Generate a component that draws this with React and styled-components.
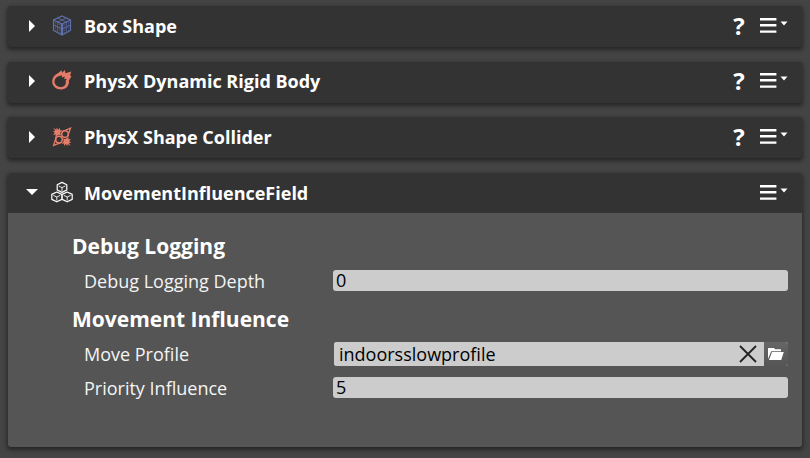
import React, { useState } from "react";
import styled, { createGlobalStyle } from "styled-components";

const Global = createGlobalStyle`
  *, *::before, *::after { box-sizing: border-box; }
  body {
    margin: 0;
    background: #444444;
    color: #ffffff;
    font-family: "Open Sans", "Noto Sans", sans-serif;
    font-size: 18px;
    line-height: 24px;
  }
`;

const Inspector = styled.main`
  display: flex;
  flex-direction: column;
  justify-content: space-between;
  min-height: 100vh;
  padding: 6px 8px 11px;
`;

const Card = styled.section`
  border-radius: 3px;
  background: ${(p) => (p.$open ? "#555555" : "#333333")};
  box-shadow: 0 2px 4px 1px rgba(0, 0, 0, 0.45);
`;

const CardHeader = styled.header`
  display: flex;
  align-items: center;
  height: ${(p) => (p.$open ? 40 : 41)}px;
  padding: ${(p) => (p.$open ? "0 14px 0 16px" : "0 14px 2px 16px")};
  border-radius: ${(p) => (p.$open ? "3px 3px 0 0" : "3px")};
  background: #333333;
`;

const IconButton = styled.button`
  display: flex;
  align-items: center;
  justify-content: center;
  flex: none;
  width: ${(p) => p.$width}px;
  height: 24px;
  padding: 0;
  border: 0;
  background: none;
  color: inherit;
`;

const HelpButton = styled(IconButton)`
  font-family: inherit;
  font-size: 24px;
  line-height: 24px;
  font-weight: 700;
`;

const IconSlot = styled.span`
  display: flex;
  padding-left: 8px;
`;

const TypeIcon = styled.svg`
  flex: none;
  width: 24px;
  height: 24px;
  margin: 0 10px 0 2px;
  fill: none;
  stroke: ${(p) => p.$color};
  color: ${(p) => p.$color};
`;

const Title = styled.h2`
  flex: 1;
  margin: 0;
  font-size: 18px;
  line-height: 24px;
  font-weight: 700;
`;

const Tools = styled.div`
  display: flex;
  gap: 13px;
`;

const Body = styled.div`
  padding: 20px 14px 47px 64px;
`;

const Section = styled.section`
  & + & { margin-top: 13px; }
`;

const Heading = styled.h3`
  margin: 0 0 10px;
  font-size: 21px;
  line-height: 26px;
  font-weight: 700;
`;

const Fields = styled.div`
  display: grid;
  gap: 10px;
`;

const Field = styled.div`
  display: grid;
  grid-template-columns: 249px 1fr;
  align-items: center;
  padding-left: 12px;
`;

const Label = styled.label`
  line-height: 24px;
  color: #f4f4f4;
`;

const ValueInput = styled.input`
  width: 100%;
  min-width: 0;
  height: 21px;
  padding: 0 3px;
  border: 0;
  border-radius: 3px;
  outline: 0;
  background: #cccccc;
  color: #000000;
  font: inherit;
  line-height: 21px;
`;

const AssetPicker = styled.div`
  display: flex;
  height: 24px;
  margin-left: 1px;
  border-radius: 3px;
  overflow: hidden;
  background: #cccccc;
`;

const AssetInput = styled(ValueInput)`
  flex: 1;
  height: 24px;
  padding: 0 5px;
  border-radius: 0;
`;

const BrowseButton = styled(IconButton)`
  background: linear-gradient(#666666, #555555);
`;

const Caret = ({ open }) => (
  <svg width="16" height="16" viewBox="0 0 16 16" fill="#fff" aria-hidden="true">
    <path d={open ? "M2 4H14L8 10Z" : "M5 2V14L11 8Z"} />
  </svg>
);

const BoxIcon = () => (
  <TypeIcon $color="#5f6fae" viewBox="0 0 24 24" strokeWidth="1" aria-hidden="true">
    <path strokeWidth="1.2" d="M12 2L20.5 6V16.5L12 21L3.5 16.5V6ZM3.5 6L12 10L20.5 6" />
    <path strokeWidth="2.2" d="M12 10V21" />
    <path strokeWidth="0.8" d="M7.7 4L12 6L16.3 4M7.7 8L12 6L16.3 8M7.7 8V18.6M16.3 8V18.6M3.5 11L12 15.2L20.5 11" />
    <path strokeWidth="1.4" strokeDasharray="1.6 1" d="M5.5 8V17M18.5 8V17M9.8 10V19.5M14.2 10V19.5" strokeOpacity="0.55" />
  </TypeIcon>
);

const FireballIcon = () => (
  <TypeIcon $color="#e57b69" viewBox="0 0 24 24" aria-hidden="true">
    <path
      fill="currentColor"
      stroke="none"
      fillRule="evenodd"
      d="M21.3 2.6L20.1 6.5L21.5 7.2L18.9 11.4C19.7 16.5 16 20.4 11 20.4C6.2 20.4 2.2 17 2.2 12.4C2.2 8.9 4.5 6 8.3 4.1L11.6 1.2L12.1 3.7L14.8 1.1L15.5 4.2ZM9.3 6.9C6.3 7.7 4.5 9.8 4.5 12.6C4.5 15.7 7.3 18.1 10.8 18.1C14.3 18.1 16.6 15 15.6 12.2L16.9 9.8L14.3 10.2L14.7 7.6L11.8 8.4L12 6.2Z"
    />
  </TypeIcon>
);

const ColliderIcon = () => (
  <TypeIcon $color="#e57b69" viewBox="0 0 24 24" strokeWidth="1.5" aria-hidden="true">
    <circle cx="15" cy="9" r="3.3" />
    <circle cx="9" cy="14.5" r="3.3" />
    <path strokeWidth="1.3" d="M12.3 6.5L20.5 3.2L17.8 11M6.2 12L3.6 20.3L11.5 17.3" />
    <path
      fill="currentColor"
      stroke="none"
      d="M3.3 3L6.4 4.8L6.6 2.6L8.2 4.7L10 2.8L9.9 5.3L12.3 5L10.3 7.5L10.8 10.2L8.2 9.8L5.5 12L5.6 9.5L3 9.8L4.8 7.8L2.8 6.2L5.2 5.9ZM20.8 20.8L17.6 19L17.4 21.2L15.8 19.1L14 21L14.1 18.5L11.7 18.8L13.7 16.3L13.2 13.6L15.8 14L18.5 11.8L18.4 14.3L21 14L19.2 16L21.2 17.6L18.8 17.9Z"
    />
  </TypeIcon>
);

const CubesIcon = () => (
  <TypeIcon $color="#ffffff" viewBox="0 0 24 24" strokeWidth="1.2" strokeLinejoin="round" aria-hidden="true">
    <path d="M12 1.4L16.8 3.8V9L12 11.4L7.2 9V3.8ZM6.8 11L11.8 13.4V18.4L6.8 20.8L1.8 18.4V13.4ZM17.2 11L22.2 13.4V18.4L17.2 20.8L12.2 18.4V13.4Z" />
    <path strokeWidth="0.9" d="M8.7 5L12 6.6L15.3 5M12 6.6V10M3.4 14.4L6.8 16L10.2 14.4M6.8 16V19.6M13.8 14.4L17.2 16L20.6 14.4M17.2 16V19.6" />
  </TypeIcon>
);

const MenuIcon = () => (
  <svg width="28" height="18" viewBox="0 0 28 18" fill="#fff" aria-hidden="true">
    <path d="M0 1H16.4V3.4H0ZM0 7H16.4V9.4H0ZM0 13.4H16.4V15.8H0ZM20.5 4.5H27.5L24 8.5Z" />
  </svg>
);

const CloseIcon = () => (
  <svg width="18" height="18" viewBox="0 0 18 18" stroke="#222" strokeWidth="1.8" aria-hidden="true">
    <path d="M1 1L17 17M17 1L1 17" />
  </svg>
);

const FolderIcon = () => (
  <svg width="16" height="14" viewBox="0 0 16 14" fill="#fff" aria-hidden="true">
    <path d="M0 12V1H6L7 2.2H13V4.2H3.2Z" />
    <path d="M4 5H15.8L13.2 13H1Z" />
  </svg>
);

function Component({ title, icon, help, initiallyOpen = false, children }) {
  const [open, setOpen] = useState(initiallyOpen);
  return (
    <Card $open={open}>
      <CardHeader $open={open}>
        <IconButton
          $width={16}
          type="button"
          aria-label={title}
          aria-expanded={open}
          onClick={() => setOpen(!open)}
        >
          <Caret open={open} />
        </IconButton>
        <IconSlot>{icon}</IconSlot>
        <Title>{title}</Title>
        <Tools>
          {help && (
            <HelpButton $width={16} type="button" aria-label="Help">
              ?
            </HelpButton>
          )}
          <IconButton $width={28} type="button" aria-label="Menu">
            <MenuIcon />
          </IconButton>
        </Tools>
      </CardHeader>
      {open && children}
    </Card>
  );
}

export default function App() {
  const [depth, setDepth] = useState("0");
  const [profile, setProfile] = useState("indoorsslowprofile");
  const [priority, setPriority] = useState("5");

  return (
    <>
      <Global />
      <Inspector>
        <Component title="Box Shape" icon={<BoxIcon />} help />
        <Component title="PhysX Dynamic Rigid Body" icon={<FireballIcon />} help />
        <Component title="PhysX Shape Collider" icon={<ColliderIcon />} help />
        <Component title="MovementInfluenceField" icon={<CubesIcon />} initiallyOpen>
          <Body>
            <Section>
              <Heading>Debug Logging</Heading>
              <Field>
                <Label htmlFor="depth">Debug Logging Depth</Label>
                <ValueInput id="depth" value={depth} onChange={(e) => setDepth(e.target.value)} />
              </Field>
            </Section>
            <Section>
              <Heading>Movement Influence</Heading>
              <Fields>
                <Field>
                  <Label htmlFor="profile">Move Profile</Label>
                  <AssetPicker>
                    <AssetInput id="profile" value={profile} onChange={(e) => setProfile(e.target.value)} />
                    <IconButton $width={32} type="button" aria-label="Clear" onClick={() => setProfile("")}>
                      <CloseIcon />
                    </IconButton>
                    <BrowseButton $width={24} type="button" aria-label="Browse">
                      <FolderIcon />
                    </BrowseButton>
                  </AssetPicker>
                </Field>
                <Field>
                  <Label htmlFor="priority">Priority Influence</Label>
                  <ValueInput id="priority" value={priority} onChange={(e) => setPriority(e.target.value)} />
                </Field>
              </Fields>
            </Section>
          </Body>
        </Component>
      </Inspector>
    </>
  );
}
